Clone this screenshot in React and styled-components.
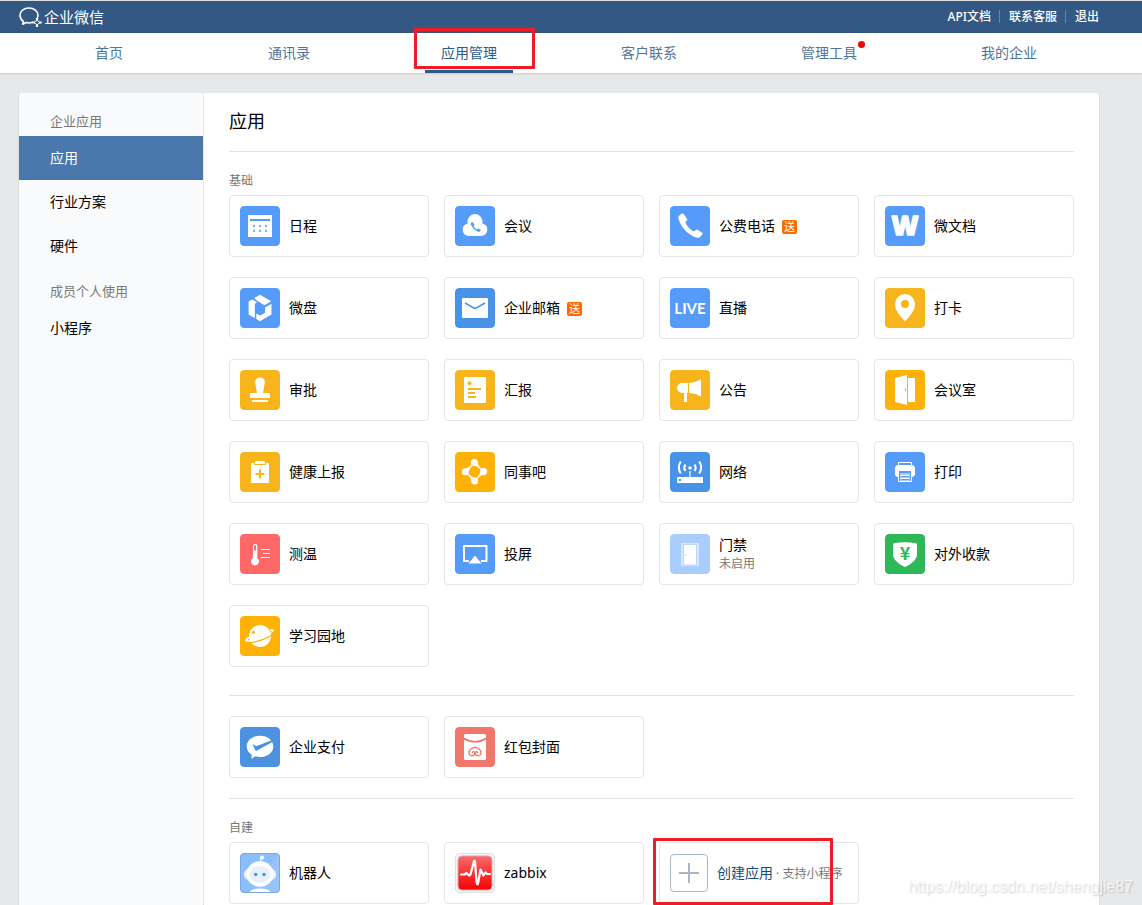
import React from "react";
import styled, { createGlobalStyle } from "styled-components";

const GlobalStyle = createGlobalStyle`
  *, *::before, *::after { box-sizing: border-box; }
  body {
    margin: 0;
    background: #e7e8ea;
    color: #000;
    font-family: "Noto Sans", "Noto Sans CJK SC", sans-serif;
    font-size: 14px;
    line-height: 20px;
  }
  a { color: inherit; text-decoration: none; }
  h1, h2, ul { margin: 0; padding: 0; font-weight: 400; list-style: none; }
`;

const Page = styled.div`
  position: relative;
  display: flex;
  flex-direction: column;
  min-height: 100vh;
`;

const Header = styled.header`
  display: flex;
  align-items: center;
  justify-content: space-between;
  height: 33px;
  padding: 0 43px 0 19px;
  border-top: 1px solid #dcdee0;
  background: #335883;
  color: #fff;
`;

const Brand = styled.a`
  display: flex;
  align-items: center;
  gap: 1px;
  font-size: 15px;
  line-height: 18px;
  svg { display: block; }
`;

const HeaderLinks = styled.div`
  display: flex;
  align-items: center;
  font-size: 12px;
  font-weight: 500;
  a + a::before {
    content: "";
    display: inline-block;
    width: 1px;
    height: 13px;
    margin: 0 9px 0 8px;
    background: #6587ab;
    vertical-align: -2px;
  }
`;

const Nav = styled.nav`
  display: grid;
  grid-template-columns: repeat(6, 1fr);
  height: 40px;
  padding: 0 43px 0 19px;
  background: #fff;
  box-shadow: 0 1px 2px rgba(0, 0, 0, 0.14);
`;

const NavItem = styled.div`
  position: relative;
  display: flex;
  justify-content: center;
`;

const NavLink = styled.a`
  position: relative;
  padding: 10px 16px 7px;
  color: ${(p) => (p.$active ? "#2c5a8a" : "#4e74a0")};
  border-bottom: 3px solid ${(p) => (p.$active ? "#2c5a8a" : "transparent")};
`;

const Dot = styled.span`
  position: absolute;
  top: 8px;
  right: 8px;
  width: 7px;
  height: 7px;
  border-radius: 50%;
  background: #f00;
`;

const Marker = styled.span`
  position: absolute;
  top: ${(p) => p.$top}px;
  left: ${(p) => p.$left}px;
  width: ${(p) => p.$width}px;
  height: ${(p) => p.$height}px;
  border: 3px solid #ee1c25;
  border-radius: 1px;
  pointer-events: none;
`;

const Panel = styled.div`
  flex: 1;
  display: flex;
  margin: 20px 43px 0 19px;
  border-radius: 4px 4px 0 0;
  background: #fff;
  box-shadow: 0 1px 2px rgba(0, 0, 0, 0.14);
`;

const Sidebar = styled.aside`
  flex: none;
  width: 185px;
  padding-top: 5px;
  border-right: 1px dotted #d9dbde;
  border-radius: 4px 0 0 0;
  background: #f9fafc;
`;

const SideHeading = styled.h2`
  padding: 14px 0 6px 31px;
  color: #787878;
  font-size: 13px;
  line-height: 18px;
`;

const SideLink = styled.a`
  display: block;
  padding: 12px 0 12px 31px;
  color: ${(p) => (p.$active ? "#fff" : "#000")};
  background: ${(p) => (p.$active ? "#4a77ac" : "transparent")};
`;

const Content = styled.main`
  flex: 1;
  min-width: 0;
  padding: 0 25px;
`;

const Title = styled.h1`
  padding: 16px 0 18px;
  font-size: 18px;
  line-height: 24px;
`;

const Section = styled.section`
  padding: 20px 0 ${(p) => (p.$wide ? 28 : 20)}px;
  border-top: 1px solid #e2e3e5;
  &:last-child { padding-bottom: 0; }
`;

const SectionLabel = styled.h2`
  padding-bottom: 5px;
  color: #787878;
  font-size: 12px;
  line-height: 18px;
`;

const Cards = styled.ul`
  display: grid;
  grid-template-columns: repeat(4, 1fr);
  gap: 20px 15px;
`;

const CardItem = styled.li`
  position: relative;
`;

const Card = styled.a`
  display: flex;
  align-items: center;
  gap: 9px;
  height: 62px;
  padding: 0 10px;
  border: 1px solid #e4e6e9;
  border-radius: 4px;
  background: #fff;
  white-space: nowrap;
  svg { flex: none; display: block; border-radius: 4px; }
`;

const Status = styled.div`
  color: #787878;
  font-size: 12px;
  line-height: 18px;
`;

const Badge = styled.span`
  display: inline-block;
  width: 15px;
  height: 14px;
  margin-left: 7px;
  border-radius: 2px;
  background: #ff6a00;
  color: #fff;
  font-size: 11px;
  line-height: 14px;
  text-align: center;
`;

const PlusBox = styled.span`
  display: grid;
  place-items: center;
  flex: none;
  width: 38px;
  height: 38px;
  border: 1px solid #a9b6c7;
  border-radius: 4px;
`;

const CreateLabel = styled.span`
  color: #15497d;
  small { color: #787878; font-size: 12px; }
`;

const Watermark = styled.div`
  position: absolute;
  right: 9px;
  bottom: 8px;
  color: rgba(255, 255, 255, 0.8);
  font-family: "Liberation Sans", sans-serif;
  font-size: 16px;
  text-shadow: 1px 1px 2px rgba(0, 0, 0, 0.2);
`;

const W = "#fff";
const BLUE = "#549bfa";
const DEEP = "#4893e8";
const YELLOW = "#f7b51b";
const AMBER = "#ffb206";

const drawings = {
  calendar: [BLUE, <>
    <path fill={W} d="M8 9h24v22H8z" />
    <path fill={BLUE} d="M10 13h20v2H10z" />
    <path fill={BLUE} opacity=".8" d="M13 19h2v2h-2zM19 19h2v2h-2zM25 19h2v2h-2zM13 24h2v2h-2zM19 24h2v2h-2zM25 24h2v2h-2z" />
  </>],
  cloud: [BLUE, <>
    <path fill={W} d="M13.500 30a6.400 6.400 0 0 1-.9-12.600 7.600 7.600 0 1 1 14.800 0A6.400 6.400 0 0 1 26.500 30z" />
    <path fill={BLUE} d="M16.800 16.200c-1 .7-1.200 1.700-.7 2.900 1.300 3 3.600 5.200 6.600 6.500 1.200.4 2.200.2 2.900-.7.3-.4.200-.8-.2-1.100l-1.800-1.200c-.4-.2-.8-.2-1.100.1l-.7.7c-1.500-.8-2.500-1.900-3.300-3.300l.7-.8c.3-.3.3-.6.1-1l-1.400-1.900c-.3-.4-.7-.5-1.100-.2z" />
  </>],
  phone: [BLUE, <path fill={W} d="M11.500 7.800 9.300 9.400C8.200 10.300 8 11.600 8.500 13c2.600 8.500 9.100 15.600 17.500 18.400 1.500.5 3 .5 4.100-.5l2.200-2.300c.6-.7.5-1.400-.2-1.900l-4.500-3c-.7-.4-1.400-.4-1.900.2l-1.800 1.700c-4.100-2.300-7-5.500-8.600-9.600l1.500-1.400c.6-.6.7-1.200.2-1.900l-3.300-4.600c-.6-.8-1.400-.9-2.200-.3z" />],
  doc: [BLUE, <text x="20" y="29" textAnchor="middle" fill={W} stroke={W} strokeWidth="1.400" strokeLinejoin="round" fontFamily="Open Sans" fontSize="26" fontWeight="800">W</text>],
  disk: [BLUE, <path fill={W} d="M14.200 10.100 20 6.800l11.300 6.500-6.900 4-8.300-5.200zM8.600 13.600l3.600-2.200 5 2.800-2.400 1.600.1 14.400-6.300-3.600zM31.500 15.700v10.900L20 33.200l-3.700-2.200v-5.500l3.700 2.100 5-2.900v-5.200z" />],
  mail: [DEEP, <>
    <rect fill={W} x="7" y="10" width="26" height="20" rx="1" />
    <path fill="none" stroke={DEEP} strokeWidth="1.600" d="m10 15 10 5.700L30 15" />
  </>],
  live: [BLUE, <text x="20" y="26" textAnchor="middle" fill={W} fontFamily="Lato" fontSize="15" fontWeight="700">LIVE</text>],
  pin: [YELLOW, <path fill={W} fillRule="evenodd" d="M20 6a10 10 0 0 0-10 10c0 7 5.500 12.500 10 17.300C24.500 28.500 30 23 30 16A10 10 0 0 0 20 6zm0 6a4 4 0 1 1 0 8 4 4 0 0 1 0-8z" />],
  stamp: [YELLOW, <path fill={W} d="M20 7.500c3 0 5 2.200 4.800 5.200L23 23h6a1 1 0 0 1 1 1v4H10v-4a1 1 0 0 1 1-1h6l-1.800-10.300c-.2-3 1.800-5.200 4.800-5.200zM12 30h16v2H12z" />],
  report: [YELLOW, <>
    <rect fill={W} x="9" y="7" width="22" height="26" rx="1" />
    <path fill={YELLOW} d="M13 18h13v2H13zM13 22h7v2h-7zM13 26h8v2h-8z" />
    <circle fill={YELLOW} cx="14.500" cy="13.200" r="2" />
  </>],
  horn: [YELLOW, <path fill={W} d="M12 13h6v10h-1v9h-3v-9h-2a5 5 0 0 1 0-10zM19 13c5-.5 8.500-1.800 12-4v17.500c-3.500-2-7-3.200-12-3.500z" />],
  door: [AMBER, <>
    <path fill={W} d="M10 8 22 5v30l-12-3zM23 8h7v24h-7z" />
    <path fill={AMBER} d="M20 18h1v3h-1z" />
  </>],
  health: [YELLOW, <>
    <rect fill={W} x="11" y="11" width="18" height="20" rx="1" />
    <path fill={W} stroke={YELLOW} d="M15 8.500h10l.5 4h-11z" />
    <path fill={YELLOW} d="M19 17.500h2V21h3.500v2H21v3.500h-2V23h-3.500v-2H19z" />
  </>],
  forum: [AMBER, <>
    {[0, 90, 180, 270].map((turn) => (
      <path key={turn} fill={W} transform={`rotate(${turn} 19.500 19.700)`} d="M19.500 7a3.500 3.500 0 0 1 3.400 4.200c.4 2 1.800 4 4 5.900l-.9.9c-2.300-2.400-4.300-3.700-6.600-3.900A3.550 3.550 0 0 1 19.500 7z" />
    ))}
  </>],
  network: [DEEP, <>
    <rect fill={W} x="7" y="25" width="26" height="6" />
    <path fill={DEEP} d="M9 27h2v2H9z" />
    <path fill={W} opacity=".6" d="M19 19h2v6h-2z" />
    <circle fill={W} cx="20" cy="16" r="1.800" />
    <path fill="none" stroke={W} strokeWidth="2" d="M15.400 12.500q-2.200 3.200 0 6.500M24.600 12.500q2.200 3.200 0 6.500M10.800 9.500q-4 5.800 0 12M29.200 9.500q4 5.800 0 12" />
  </>],
  printer: [BLUE, <>
    <path fill="none" stroke={W} d="M13.500 13v-2.500h13V13" />
    <path fill={W} d="M12 13h16l2 2v8l-2 2H12l-2-2v-8z" />
    <path fill={BLUE} d="M13 19h14v6H13z" />
    <path fill="#a9cdfd" d="M15 21h10v8H15z" />
    <path fill="none" stroke={W} d="M13.500 19v10.500h13V19" />
    <path stroke={BLUE} d="M16 24.500h8M16 27.500h8" />
    <path stroke={W} d="M16 23.500h8M16 26.500h8" />
  </>],
  heat: ["#ff6867", <>
    <path fill="none" stroke={W} strokeWidth="1.200" d="M13.500 24V12a1.600 1.600 0 0 1 3.200 0v12" />
    <path fill={W} d="M13.500 16.500h3v7.200a4 4 0 1 1-3 0z" />
    <path stroke={W} d="M21 15.500h9M23 19.500h7M21 23.500h9" />
  </>],
  cast: [BLUE, <>
    <path fill="none" stroke={W} strokeWidth="2" strokeLinejoin="round" d="M14 27H9V12h22.500v15H26" />
    <path fill={W} stroke={BLUE} d="m20 21 7.500 9h-15z" />
  </>],
  gate: ["#a9cefd", <>
    <path fill="#d5e7fe" d="M11 9h18v23H11z" />
    <path fill={W} stroke="#b9d7fd" d="M13.500 10.500h13V31h-13z" />
    <path fill="#a9cefd" d="M15 20.500h1.300V22H15z" />
  </>],
  collect: ["#2fb857", <>
    <path fill={W} d="M9 9.200C16 8 24 8 31 9.200q1 .2 1 1.200v10c0 5.500-6 9.600-12 12.600-6-3-12-7.100-12-12.600v-10q0-1 1-1.200z" />
    <text x="20" y="26" textAnchor="middle" fill="#2fb857" fontFamily="Noto Sans CJK SC" fontSize="18" fontWeight="700">¥</text>
  </>],
  planet: [AMBER, <>
    <circle fill={W} cx="20" cy="20" r="11" />
    <path fill="none" stroke={AMBER} strokeWidth="1.200" d="M8 26.500c6 .6 17-3 23.500-7.300" />
    <path fill={W} d="M9.500 20.300C5.800 22.300 4.500 24.200 5 25c1.500 2.200 14-1 20.500-4.700 6-2.700 9.300-5.300 8.500-6.600-.4-.7-2-.7-4.200-.3l.8 1.800q1.200-.1 1.100.2c-.8 1.600-4.400 3.600-8.400 5.200C17.500 23.200 10 24.500 8 24.200c-.4-.3.8-1.500 2.200-2.400z" />
    <circle fill={AMBER} cx="13.500" cy="16.300" r="1.500" />
  </>],
  pay: ["#4c92e1", <>
    <path fill={W} d="M20 8.700c7.600 0 13.300 4.600 13.300 10.700S27.600 30 20 30c-1.700 0-3.300-.2-4.800-.7L11.500 32l.2-4.200c-3-2-5-4.900-5-8.400C6.700 13.300 12.400 8.700 20 8.700z" />
    <path fill="#4c92e1" d="m12.500 17 3 1.700c.7.4 1.300.4 2 .1l14-5.600.8 1.700-15.600 8.900c-.6.300-1.100.1-1.400-.5z" />
  </>],
  packet: ["#f1766c", <>
    <rect fill={W} x="9" y="7" width="22" height="26" rx="1.500" />
    <path fill="none" stroke="#f1766c" strokeWidth="1.600" d="M8 11q12 7.500 24 0" />
    <path fill="none" stroke="#f1766c" strokeWidth="1.300" strokeLinecap="round" d="M17.300 25.800c0-1.500 2.400-1.700 2.400.4 0 3.200-5.700 3.700-5.700-.2 0-3.200 3-5.500 6-5.500s6 2.300 6 5.500c0 3.900-5.700 3.400-5.700.2 0-2.100 2.400-1.900 2.400-.4" />
  </>],
  robot: ["#8cbefb", <>
    <path fill="#a5cdfd" d="M40 0v40H10z" opacity=".4" />
    <path stroke="#e7f2ff" strokeWidth="1.600" d="m20 9 1.600-4.500" />
    <circle fill={W} cx="22" cy="4.500" r="2" />
    <rect fill="#eaf3ff" x="4" y="16" width="32" height="11" rx="5" />
    <ellipse fill={W} cx="20" cy="21" rx="13.500" ry="12.700" />
    <ellipse fill="#e6f0fd" cx="20" cy="21.500" rx="10.500" ry="8.500" />
    <circle fill="#478fe8" cx="15.700" cy="21.500" r="1.700" />
    <circle fill="#478fe8" cx="24" cy="21.500" r="1.700" />
    <path fill={W} d="M9 40c1.500-3.500 6-4.500 11-4.500s9.500 1 11 4.500z" />
    <rect fill="none" stroke="#7ba9df" x=".5" y=".5" width="39" height="39" rx="3.500" />
  </>],
  zabbix: ["#f4f5f8", <>
    <defs>
      <linearGradient id="pulse" x1="0" y1="0" x2="0" y2="1">
        <stop offset="0" stopColor="#fb6a6a" />
        <stop offset="1" stopColor="#f80000" />
      </linearGradient>
    </defs>
    <rect fill="none" stroke="#dcdfe4" x=".5" y=".5" width="39" height="39" rx="3.500" />
    <rect fill="url(#pulse)" stroke="#e3a5ab" x="3" y="3" width="34" height="34" rx="4" />
    <path fill="none" stroke={W} strokeWidth="2.200" strokeLinejoin="round" strokeLinecap="round" d="M6 21.500h3.500l2-1.500 2.500 2.500 1.500-1 3.300-13q.7-2 1.200 0l1.700 21.800q.6 2.400 1.400 0l2.400-13.800 3 6 2-3 1.500 1.500H35" />
  </>],
};

function AppIcon({ name }) {
  const [background, shapes] = drawings[name];
  return (
    <svg width="40" height="40" viewBox="0 0 40 40" aria-hidden="true">
      <rect width="40" height="40" rx="4" fill={background} />
      {shapes}
    </svg>
  );
}

const basicApps = [
  { icon: "calendar", name: "日程" },
  { icon: "cloud", name: "会议" },
  { icon: "phone", name: "公费电话", badge: "送" },
  { icon: "doc", name: "微文档" },
  { icon: "disk", name: "微盘" },
  { icon: "mail", name: "企业邮箱", badge: "送" },
  { icon: "live", name: "直播" },
  { icon: "pin", name: "打卡" },
  { icon: "stamp", name: "审批" },
  { icon: "report", name: "汇报" },
  { icon: "horn", name: "公告" },
  { icon: "door", name: "会议室" },
  { icon: "health", name: "健康上报" },
  { icon: "forum", name: "同事吧" },
  { icon: "network", name: "网络" },
  { icon: "printer", name: "打印" },
  { icon: "heat", name: "测温" },
  { icon: "cast", name: "投屏" },
  { icon: "gate", name: "门禁", status: "未启用" },
  { icon: "collect", name: "对外收款" },
  { icon: "planet", name: "学习园地" },
];

const payApps = [
  { icon: "pay", name: "企业支付" },
  { icon: "packet", name: "红包封面" },
];

const ownApps = [
  { icon: "robot", name: "机器人" },
  { icon: "zabbix", name: "zabbix" },
];

const navItems = ["首页", "通讯录", "应用管理", "客户联系", "管理工具", "我的企业"];

function AppCards({ apps, children }) {
  return (
    <Cards>
      {apps.map((app) => (
        <CardItem key={app.name}>
          <Card href="#">
            <AppIcon name={app.icon} />
            <div>
              {app.name}
              {app.badge && <Badge>{app.badge}</Badge>}
              {app.status && <Status>{app.status}</Status>}
            </div>
          </Card>
        </CardItem>
      ))}
      {children}
    </Cards>
  );
}

export default function App() {
  return (
    <Page>
      <GlobalStyle />
      <Header>
        <Brand href="#">
          <svg width="24" height="22" viewBox="0 0 24 22" fill="none" stroke="#fff" aria-hidden="true">
            <path strokeWidth="1.600" strokeLinecap="round" strokeLinejoin="round" d="M18.500 11.500c.3-.8.500-1.500.500-2.300C19 5 15 2 9.900 2S1 5 1 9.200c0 2.600 1.300 4.700 3.300 6.100L3.800 18.300l3.200-1.800c2.300.7 4.300.600 6.500-.2" />
            <path d="m18 13.200 1.200 2.200 2.300 1.100-2.300 1.100-1.200 2.200-1.200-2.200-2.300-1.100 2.300-1.100z" />
            <path fill="#fff" stroke="none" d="M16.900 12h2.200v2.200h-2.200zM20.500 15.400h2.200v2.200h-2.200zM16.900 18.800h2.200V21h-2.200zM13.300 15.400h2.200v2.200h-2.200z" />
          </svg>
          企业微信
        </Brand>
        <HeaderLinks>
          <a href="#">API文档</a>
          <a href="#">联系客服</a>
          <a href="#">退出</a>
        </HeaderLinks>
      </Header>

      <Nav>
        {navItems.map((name) => (
          <NavItem key={name}>
            <NavLink href="#" $active={name === "应用管理"}>
              {name}
              {name === "管理工具" && <Dot />}
            </NavLink>
            {name === "应用管理" && <Marker $top={-5} $left={35} $width={121} $height={41} />}
          </NavItem>
        ))}
      </Nav>

      <Panel>
        <Sidebar>
          <SideHeading>企业应用</SideHeading>
          <SideLink href="#" $active>应用</SideLink>
          <SideLink href="#">行业方案</SideLink>
          <SideLink href="#">硬件</SideLink>
          <SideHeading>成员个人使用</SideHeading>
          <SideLink href="#">小程序</SideLink>
        </Sidebar>

        <Content>
          <Title>应用</Title>
          <Section $wide>
            <SectionLabel>基础</SectionLabel>
            <AppCards apps={basicApps} />
          </Section>
          <Section>
            <AppCards apps={payApps} />
          </Section>
          <Section>
            <SectionLabel>自建</SectionLabel>
            <AppCards apps={ownApps}>
              <CardItem>
                <Card href="#">
                  <PlusBox>
                    <svg width="20" height="20" viewBox="0 0 20 20" aria-hidden="true">
                      <path fill="#a9b6c7" d="M9 0h2v9h9v2h-9v9H9v-9H0V9h9z" />
                    </svg>
                  </PlusBox>
                  <CreateLabel>
                    创建应用<small> · 支持小程序</small>
                  </CreateLabel>
                </Card>
                <Marker $top={-4} $left={-6} $width={180} $height={67} />
              </CardItem>
            </AppCards>
          </Section>
        </Content>
      </Panel>
      <Watermark>https://blog.csdn.net/shengjie87</Watermark>
    </Page>
  );
}
